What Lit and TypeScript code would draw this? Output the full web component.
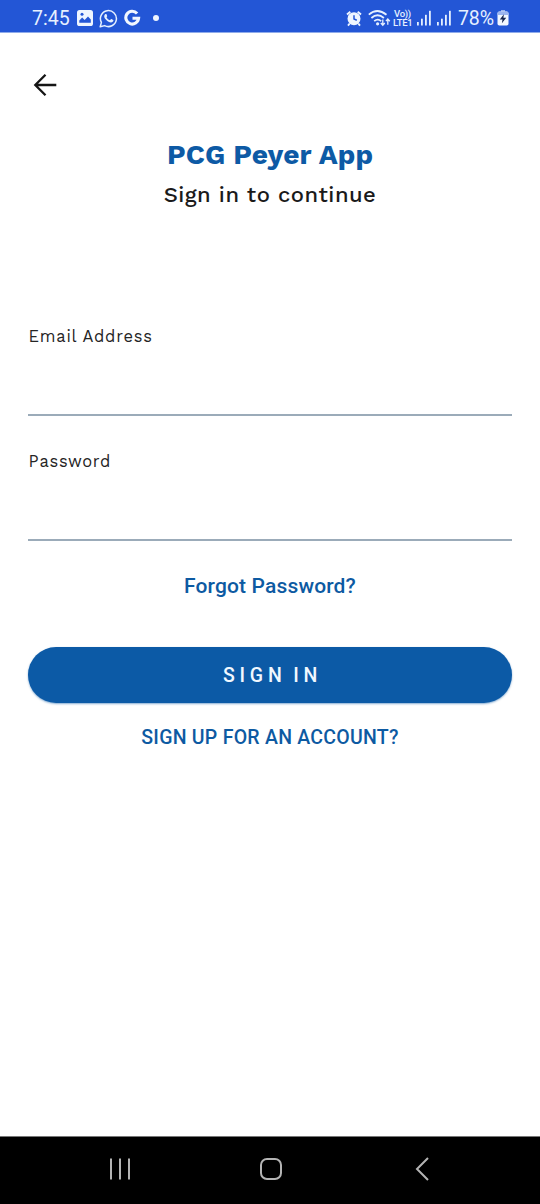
import { LitElement, html, css } from "lit";
import { customElement, property } from "lit/decorators.js";

const signal = html`<svg class="signal" width="14" height="16" viewBox="0 0 14 16" fill="#e4efff">
  <rect x="0" y="12" width="1.8" height="3.5" /><rect x="4" y="8.7" width="1.8" height="6.8" />
  <rect x="8" y="4.8" width="1.8" height="10.7" /><rect x="12" y="0.8" width="1.8" height="14.7" />
</svg>`;

@customElement("status-bar")
class StatusBar extends LitElement {
  static styles = css`
    :host { display: flex; height: 32px; background: #2356d6; color: #e6f0ff; align-items: center;
      padding: 4px 31px 0 32px; box-sizing: border-box; font: 19.5px/28px Roboto, sans-serif;
      box-shadow: 0 1px 0 #8fabea; }
    svg { display: block; flex: none; }
    .time { width: 45px; white-space: nowrap; padding-top: 2px; box-sizing: border-box; }
    .whatsapp { margin-left: 6px; }
    .google { margin-left: 6px; }
    .dot { width: 6px; height: 6px; border-radius: 50%; background: #eef5ff; margin-left: 12px; }
    .spacer { flex: 1; }
    .wifi { margin-left: 6px; }
    .volte { margin-left: 2px; width: 19px; font-size: 9.5px; line-height: 9px; font-weight: 500; text-align: center; white-space: nowrap; letter-spacing: -0.3px; }
    .volte span { display: block; }
    .signal { margin-left: 5px; }
    .signal + .signal { margin-left: 6px; }
    .level { width: 39px; margin-left: 7px; white-space: nowrap; letter-spacing: -0.1px; padding-top: 2px; box-sizing: border-box; }
  `;
  render() {
    return html`
      <span class="time">7:45</span>
      <svg width="16" height="16" viewBox="0 0 16 16"><rect width="16" height="16" rx="2.6" fill="#eef5ff" />
        <path d="M2.3 12.8V10.6L5.2 7.6L7.6 10L11 6.4L13.8 9.4V12.8Z" fill="#2356d6" /><circle cx="5" cy="4.3" r="1.5" fill="#2356d6" /></svg>
      <svg class="whatsapp" width="19" height="19" viewBox="0 0 19 19" fill="none" stroke="#e6f0ff" stroke-width="1.5">
        <path d="M1.2 17.8L2.4 13.4A8 8 0 1 1 5.6 16.6Z" stroke-linejoin="round" />
        <path d="M6.1 5.3C6.6 4.7 7.3 4.8 7.5 5.3L8.2 6.9C8.3 7.3 8 7.7 7.5 8.2C8.3 9.8 9.4 10.6 10.8 11.3L11.9 10.2C12.1 9.9 12.5 10 12.8 10.2L14.3 11C14.6 11.3 14.3 12.6 13.4 13.1C11.7 14 8.9 12.8 7.3 11.1C5.6 9.3 4.3 7.1 6.1 5.3Z" fill="#e6f0ff" stroke="none" />
      </svg>
      <svg class="google" width="17" height="18" viewBox="0 0 17 18" fill="none" stroke="#f2f7ff" stroke-width="3.1">
        <path d="M13.1 4.5A6.4 6.4 0 1 0 14.6 9.2H8.5" /></svg>
      <span class="dot"></span>
      <span class="spacer"></span>
      <svg width="16" height="17" viewBox="0 0 16 17"><circle cx="8" cy="8.7" r="6.5" fill="#eef5ff" />
        <path d="M1 4.5L4.3 1.7M15 4.5L11.7 1.7M3.7 13.5L2 15.6M12.3 13.5L14 15.6" stroke="#eef5ff" stroke-width="1.9" />
        <path d="M8 5.2V9L10.8 10.2" fill="none" stroke="#2356d6" stroke-width="1.5" /></svg>
      <svg class="wifi" width="23" height="18" viewBox="0 0 23 18" fill="none" stroke="#e6f0ff" stroke-width="1.8">
        <path d="M.8 5.7Q9.2 -1.8 18.5 5.7M3.4 9Q9.5 3.6 15.9 9M6.2 12.1Q9.7 9.1 13.2 12.1" />
        <circle cx="9.6" cy="14.8" r="1.6" fill="#e6f0ff" stroke="none" />
        <path d="M14.8 10.5V16M12.8 14L14.8 16.2L16.8 14M19.8 15.8V10.2M17.9 12.2L19.8 10L21.8 12.2" stroke-width="1.3" />
      </svg>
      <span class="volte"><span>Vo))</span><span>LTE1</span></span>
      ${signal}${signal}
      <span class="level">78%</span>
      <svg width="12" height="16" viewBox="0 0 12 16"><path d="M4 0H8V2H4Z" fill="#9bb5f0" />
        <rect x=".5" y="1.6" width="11" height="14" rx="1.8" fill="#f2f7ff" /><path d="M.5 5V3.4Q.5 1.6 2.3 1.6H9.7Q11.5 1.6 11.5 3.4V5Z" fill="#9bb5f0" />
        <path d="M6.9 4.2L2.8 9.5H5.5L4.9 13.2L9.2 7.7H6.4Z" fill="#17264f" /></svg>
    `;
  }
}

@customElement("form-field")
class FormField extends LitElement {
  @property() label = "";
  @property() type = "text";
  static styles = css`
    :host { display: block; height: 125px; }
    label { display: block; height: 24px; padding-left: 0.6px; font: 16.5px/24px "Work Sans", "Noto Sans", sans-serif; letter-spacing: 0.75px; color: #252525; }
    input { display: block; width: 100%; box-sizing: border-box; height: 67px; border: 0; border-bottom: 2px solid #9babb9;
      outline: 0; background: transparent; padding: 0; font: 18px Roboto, sans-serif; }
  `;
  render() {
    return html`<label for="field">${this.label}</label><input id="field" type=${this.type} />`;
  }
}

@customElement("nav-bar")
class NavBar extends LitElement {
  static styles = css`
    :host { display: grid; grid-template-columns: 1fr 1fr 1fr; align-items: center; justify-items: center; height: 68px; box-sizing: border-box;
      background: #000; border-top: 1px solid #777; padding: 0 42px 3px 44px; }
    svg { display: block; fill: none; stroke: #b4b4b4; stroke-width: 2; }
  `;
  render() {
    return html`
      <svg width="22" height="22" viewBox="0 0 22 22"><path d="M2 .5V21.5M11 .5V21.5M20 .5V21.5" /></svg>
      <svg width="22" height="22" viewBox="0 0 22 22"><rect x="1" y="1" width="20" height="20" rx="6" /></svg>
      <svg width="14" height="24" viewBox="0 0 14 24"><path d="M13 1L2 12L13 23" /></svg>
    `;
  }
}

@customElement("app-root")
class AppRoot extends LitElement {
  static styles = css`
    :host { display: flex; flex-direction: column; height: 1204px; background: #fff; color: #1a1a1a; font-family: Roboto, sans-serif; }
    main { flex: 1; padding: 0 28px; display: flex; flex-direction: column; }
    button { border: 0; background: none; padding: 0; margin: 0; font-family: Roboto, sans-serif; display: block; }
    .back { width: 24px; height: 24px; margin: 41px 0 0 5px; }
    .back svg { display: block; }
    h1, h2 { margin: 0; text-align: center; white-space: nowrap; font-family: "Work Sans", "Noto Sans", sans-serif; }
    h1 { margin-top: 38px; font-size: 28px; line-height: 40px; font-weight: 700; color: #0d5aa5; letter-spacing: 0.1px; }
    h2 { margin-top: 4px; font-size: 22px; line-height: 32px; font-weight: 500; letter-spacing: 0.5px; }
    form { margin-top: 114px; display: flex; flex-direction: column; }
    .link { align-self: center; color: #0d5aa2; font-weight: 500; white-space: nowrap; line-height: 28px; }
    .forgot { margin-top: -3px; font-size: 21px; letter-spacing: 0.15px; }
    .primary { height: 56px; margin-top: 47px; border-radius: 28px; background: #0c5aa6; color: #f1f8ff; font-size: 19.5px; font-weight: 500;
      letter-spacing: 4.8px; word-spacing: -3px; padding-left: 5px; box-shadow: 0 1px 2px #0c5aa680; }
    .signup { margin-top: 21px; font-size: 19.5px; letter-spacing: 0.25px; }
  `;
  render() {
    return html`
      <status-bar></status-bar>
      <main>
        <button class="back" aria-label="Back"><svg width="24" height="24" viewBox="0 0 24 24" fill="none" stroke="#151515" stroke-width="2.3">
          <path d="M12.5 1.8L2.3 12L12.5 22.2M2.5 12H23.3" /></svg></button>
        <h1>PCG Peyer App</h1>
        <h2>Sign in to continue</h2>
        <form @submit=${(e: Event) => e.preventDefault()}>
          <form-field label="Email Address" type="email"></form-field>
          <form-field label="Password" type="password"></form-field>
          <button type="button" class="link forgot">Forgot Password?</button>
          <button class="primary">SIGN IN</button>
          <button type="button" class="link signup">SIGN UP FOR AN ACCOUNT?</button>
        </form>
      </main>
      <nav-bar></nav-bar>
    `;
  }
}
